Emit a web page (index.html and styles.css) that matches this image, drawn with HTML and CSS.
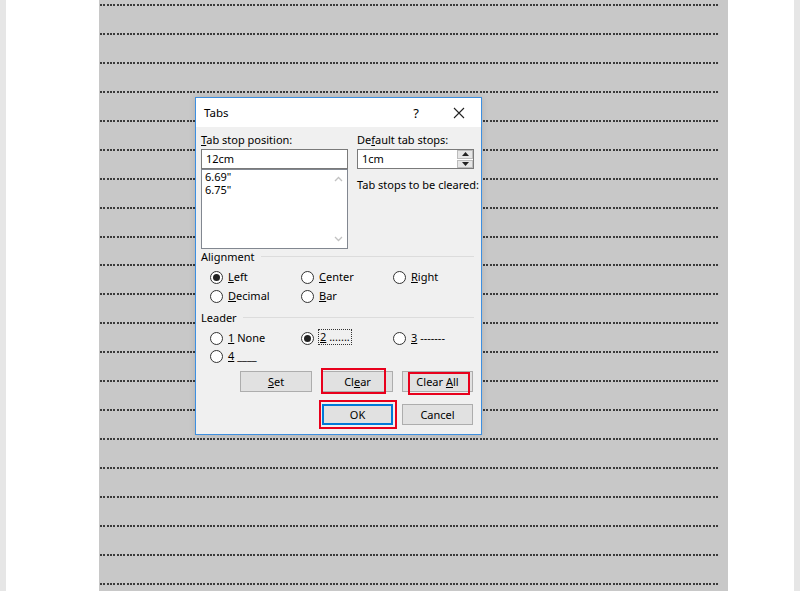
FILE: index.html
```html
<!DOCTYPE html>
<html>
<head>
<meta charset="utf-8">
<link rel="stylesheet" href="styles.css">
</head>
<body>
<div class="app">
  <div class="edge"></div>
  <div class="margin-left"></div>
  <div class="page">
    <div class="lines">
      <div class="dots"></div><div class="dots"></div><div class="dots"></div><div class="dots"></div><div class="dots"></div>
      <div class="dots"></div><div class="dots"></div><div class="dots"></div><div class="dots"></div><div class="dots"></div>
      <div class="dots"></div><div class="dots"></div><div class="dots"></div><div class="dots"></div><div class="dots"></div>
      <div class="dots"></div><div class="dots"></div><div class="dots"></div><div class="dots"></div><div class="dots"></div>
      <div class="dots"></div>
    </div>
  </div>
  <div class="margin-right"></div>
  <div class="edge"></div>

  <div class="dialog">
    <div class="titlebar">
      <span class="title">Tabs</span>
      <span class="help">?</span>
      <svg class="close" width="12" height="12" viewBox="0 0 12 12"><path d="M1 1 L11 11 M11 1 L1 11" stroke="#222" stroke-width="1.1" fill="none"/></svg>
    </div>
    <div class="body">
      <div class="top">
        <div class="col">
          <div class="label"><u>T</u>ab stop position:</div>
          <div class="input">12cm</div>
          <div class="list">
            <div class="list-items">
              <div>6.69"</div>
              <div>6.75"</div>
            </div>
            <div class="scroll">
              <svg width="9" height="6" viewBox="0 0 9 6"><path d="M1 5 L4.5 1.5 L8 5" stroke="#c2c2c2" stroke-width="1.3" fill="none"/></svg>
              <svg width="9" height="6" viewBox="0 0 9 6"><path d="M1 1 L4.5 4.5 L8 1" stroke="#c2c2c2" stroke-width="1.3" fill="none"/></svg>
            </div>
          </div>
        </div>
        <div class="col">
          <div class="label">De<u>f</u>ault tab stops:</div>
          <div class="spin">
            <span class="spin-text">1cm</span>
            <div class="spin-btns">
              <div class="spin-btn"><svg width="7" height="4" viewBox="0 0 7 4"><path d="M0 4 L3.5 0 L7 4Z" fill="#222"/></svg></div>
              <div class="spin-btn"><svg width="7" height="4" viewBox="0 0 7 4"><path d="M0 0 L3.5 4 L7 0Z" fill="#222"/></svg></div>
            </div>
          </div>
          <div class="label cleared">Tab stops to be cleared:</div>
        </div>
      </div>

      <div class="group-head"><span>Alignment</span><div class="rule"></div></div>
      <div class="radios align">
        <div class="radio"><span class="circle on"></span><span><u>L</u>eft</span></div>
        <div class="radio"><span class="circle"></span><span><u>C</u>enter</span></div>
        <div class="radio"><span class="circle"></span><span><u>R</u>ight</span></div>
        <div class="radio"><span class="circle"></span><span><u>D</u>ecimal</span></div>
        <div class="radio"><span class="circle"></span><span><u>B</u>ar</span></div>
      </div>

      <div class="group-head leader-head"><span>Leader</span><div class="rule"></div></div>
      <div class="radios leader">
        <div class="radio"><span class="circle"></span><span><u>1</u> None</span></div>
        <div class="radio"><span class="circle on"></span><span class="focus"><u>2</u> .......</span></div>
        <div class="radio"><span class="circle"></span><span><u>3</u> -------</span></div>
        <div class="radio"><span class="circle"></span><span><u>4</u> ____</span></div>
      </div>

      <div class="buttons">
        <div class="btn set"><span><u>S</u>et</span></div>
        <div class="btn"><span>Cl<u>e</u>ar</span></div>
        <div class="btn"><span>Clear <u>A</u>ll</span></div>
      </div>
      <div class="buttons second">
        <div class="btn ok"><span>OK</span></div>
        <div class="btn"><span>Cancel</span></div>
      </div>
    </div>

    <div class="mark mark-clear"></div>
    <div class="mark mark-clearall"></div>
    <div class="mark mark-ok"></div>
  </div>
</div>
</body>
</html>
```

FILE: styles.css
```css
* { box-sizing: border-box; }
html, body { margin: 0; padding: 0; }
body {
  width: 800px;
  height: 591px;
  overflow: hidden;
  font-family: "Noto Sans", "Open Sans", sans-serif;
}
.app {
  position: relative;
  display: flex;
  width: 800px;
  height: 591px;
}
.edge { width: 6px; background: #e6e6e6; }
.margin-left { width: 93px; background: #fff; }
.margin-right { width: 66px; background: #fff; }
.page {
  width: 629px;
  background: #c8c8c8;
  padding: 4px 0 0 1px;
}
.lines {
  display: flex;
  flex-direction: column;
  gap: 26.95px;
}
.dots {
  width: 618px;
  height: 2px;
  background: repeating-linear-gradient(90deg, #3a3a3a 0 2px, transparent 2px 3.33px);
}

.dialog {
  position: absolute;
  left: 195px;
  top: 97px;
  width: 287px;
  height: 338px;
  border: 1px solid #3d8fe0;
  background: #f0f0f0;
  font-size: 11px;
  color: #000;
  box-shadow: 0 0 6px rgba(0,0,0,0.12);
}
.titlebar {
  height: 29px;
  background: #fff;
  display: flex;
  align-items: center;
  padding-left: 8px;
  margin-bottom: 1px;
}
.title { font-size: 11.5px; flex: 1; }
.help { font-size: 13px; margin-right: 34px; }
.close { margin-right: 16px; }

.body { padding: 4px 7px 0 5px; }
.top {
  display: grid;
  grid-template-columns: 147px 117px;
  column-gap: 9px;
}
.label { height: 16px; line-height: 15px; margin-bottom: 1px; white-space: nowrap; }
.cleared { margin-top: 8px; }
.input {
  height: 20px;
  border: 1px solid #7a7a7a;
  background: #fff;
  padding-left: 4px;
  line-height: 17px;
}
.list {
  height: 80px;
  border: 1px solid #828790;
  background: #fff;
  display: flex;
}
.list-items { flex: 1; padding: 0 0 0 3px; line-height: 13px; }
.scroll {
  width: 17px;
  display: flex;
  flex-direction: column;
  justify-content: space-between;
  align-items: center;
  padding: 6px 0 6px 0;
}
.spin {
  height: 20px;
  border: 1px solid #7a7a7a;
  background: #fff;
  display: flex;
  align-items: center;
  padding-left: 4px;
}
.spin-text { flex: 1; line-height: 17px; align-self: flex-start; }
.spin-btns {
  width: 16px;
  height: 18px;
  display: flex;
  flex-direction: column;
  gap: 1px;
}
.spin-btn {
  flex: 1;
  background: #e6e6e6;
  border: 1px solid #bcbcbc;
  display: flex;
  align-items: center;
  justify-content: center;
}

.group-head {
  display: flex;
  align-items: center;
  height: 16px;
  line-height: 15px;
  margin-top: -1px;
}
.group-head .rule { flex: 1; height: 1px; background: #dcdcdc; margin-left: 6px; }
.leader-head { margin-top: 3px; }

.radios {
  display: grid;
  grid-template-columns: 91px 92px auto;
  padding-left: 9px;
  margin-top: 4px;
}
.radios.align { grid-auto-rows: 19px; }
.radios.leader { grid-auto-rows: 18px; margin-top: 4px; }
.radio { display: flex; align-items: center; gap: 5px; white-space: nowrap; line-height: 15px; }
.radio > span:last-child { position: relative; top: -1px; }
.circle {
  width: 13px;
  height: 13px;
  border: 1px solid #333;
  border-radius: 50%;
  background: #fff;
  display: flex;
  align-items: center;
  justify-content: center;
  flex: none;
}
.circle.on::after {
  content: "";
  width: 7px;
  height: 7px;
  border-radius: 50%;
  background: #222;
}
.focus { outline: 1px dotted #333; outline-offset: 0; padding: 0 1px; line-height: 14px; }

.buttons {
  display: flex;
  gap: 9px;
  padding-left: 39px;
  margin-top: 6px;
}
.buttons.second { margin-top: 12px; padding-left: 121px; }
.btn {
  width: 71px;
  height: 21px;
  background: #e1e1e1;
  border: 1px solid #adadad;
  display: flex;
  align-items: center;
  justify-content: center;
  line-height: 15px;
  white-space: nowrap;
}
.btn.set { width: 72px; margin-right: 1px; }
.btn.ok { border-color: #0078d7; box-shadow: inset 0 0 0 1px #0078d7; }

.mark { position: absolute; border: 2px solid #e8001c; }
.mark-clear { left: 125px; top: 270px; width: 65px; height: 26px; }
.mark-clearall { left: 212px; top: 274px; width: 62px; height: 23px; }
.mark-ok { left: 123px; top: 302px; width: 78px; height: 29px; }
```
